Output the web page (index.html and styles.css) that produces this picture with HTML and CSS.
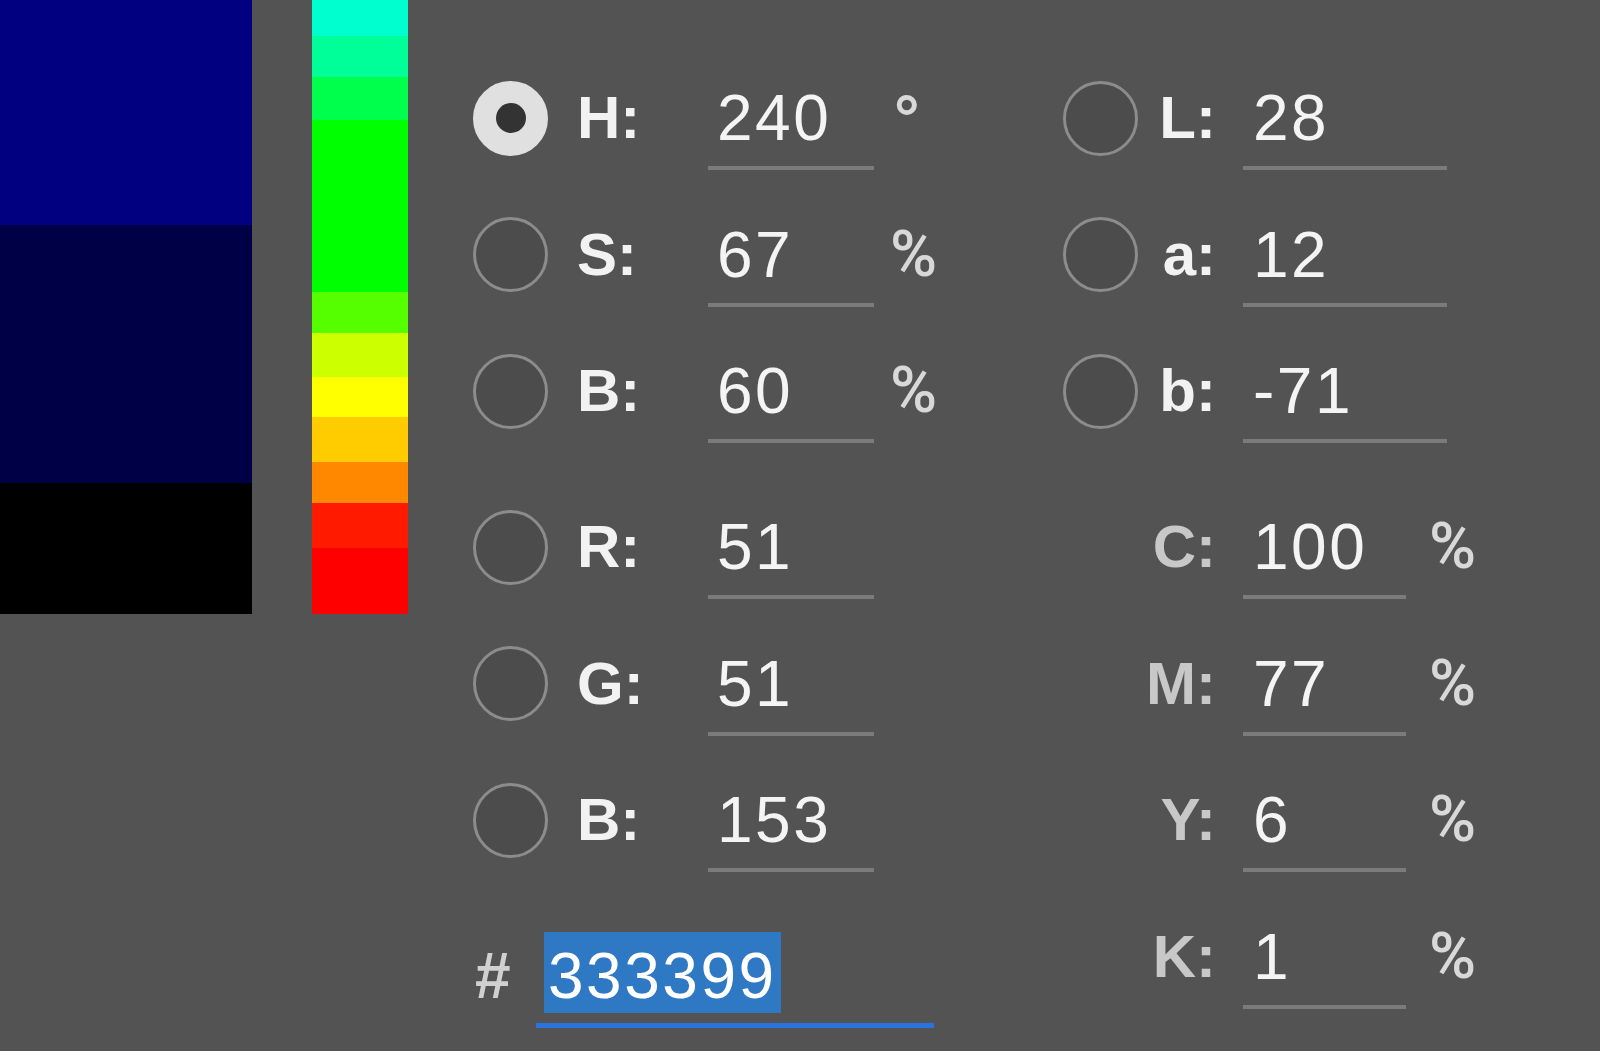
FILE: index.html
```html
<!DOCTYPE html>
<html lang="en">
<head>
<meta charset="utf-8">
<title>Color Picker</title>
<link rel="stylesheet" href="styles.css">
</head>
<body>
<div class="screen">
  <div class="swatch">
    <div class="sw sw-new"></div>
    <div class="sw sw-old"></div>
    <div class="sw sw-black"></div>
  </div>
  <div class="spectrum">
    <div class="band b1"></div>
    <div class="band b2"></div>
    <div class="band b3"></div>
    <div class="band b4"></div>
    <div class="band b5"></div>
    <div class="band b6"></div>
    <div class="band b7"></div>
    <div class="band b8"></div>
    <div class="band b9"></div>
    <div class="band b10"></div>
    <div class="band b11"></div>
  </div>
  <div class="panel">
    <div class="col col-left">
      <div class="group">
        <div class="row"><span class="radio on"><span class="dot"></span></span><span class="label">H:</span><span class="field">240</span><span class="unit deg">°</span></div>
        <div class="row"><span class="radio"></span><span class="label">S:</span><span class="field">67</span><span class="unit pct">%</span></div>
        <div class="row"><span class="radio"></span><span class="label">B:</span><span class="field">60</span><span class="unit pct">%</span></div>
      </div>
      <div class="group">
        <div class="row"><span class="radio"></span><span class="label">R:</span><span class="field">51</span></div>
        <div class="row"><span class="radio"></span><span class="label">G:</span><span class="field">51</span></div>
        <div class="row"><span class="radio"></span><span class="label">B:</span><span class="field">153</span></div>
      </div>
      <div class="hex-row">
        <span class="hash">#</span>
        <span class="hex-field"><span class="sel">333399</span></span>
      </div>
    </div>
    <div class="col col-right">
      <div class="group">
        <div class="row"><span class="radio"></span><span class="label">L:</span><span class="field wide">28</span></div>
        <div class="row"><span class="radio"></span><span class="label">a:</span><span class="field wide">12</span></div>
        <div class="row"><span class="radio"></span><span class="label">b:</span><span class="field wide">-71</span></div>
      </div>
      <div class="group">
        <div class="row"><span class="spacer"></span><span class="label dim">C:</span><span class="field">100</span><span class="unit pct">%</span></div>
        <div class="row"><span class="spacer"></span><span class="label dim">M:</span><span class="field">77</span><span class="unit pct">%</span></div>
        <div class="row"><span class="spacer"></span><span class="label dim">Y:</span><span class="field">6</span><span class="unit pct">%</span></div>
        <div class="row"><span class="spacer"></span><span class="label dim">K:</span><span class="field">1</span><span class="unit pct">%</span></div>
      </div>
    </div>
  </div>
</div>
</body>
</html>
```

FILE: styles.css
```css
* {
  box-sizing: border-box;
  margin: 0;
  padding: 0;
}

html, body {
  width: 1600px;
  height: 1051px;
  overflow: hidden;
  background: #535353;
}

body {
  font-family: "Liberation Sans", Arial, sans-serif;
}

.screen {
  display: flex;
  align-items: flex-start;
  height: 1051px;
}

/* current / previous colour swatch */
.swatch {
  width: 252px;
  flex: none;
  display: flex;
  flex-direction: column;
}
.sw-new { height: 225px; background: #000080; }
.sw-old { height: 258px; background: #000046; }
.sw-black { height: 131px; background: #000000; }

/* hue spectrum strip */
.spectrum {
  width: 96px;
  flex: none;
  margin-left: 60px;
  display: flex;
  flex-direction: column;
}
.b1 { height: 36px; background: #00ffcf; }
.b2 { height: 41px; background: #00ff99; }
.b3 { height: 43px; background: #00ff4d; }
.b4 { height: 172px; background: #00ff00; }
.b5 { height: 41px; background: #55ff00; }
.b6 { height: 44px; background: #ccff00; }
.b7 { height: 40px; background: #ffff00; }
.b8 { height: 45px; background: #ffcc00; }
.b9 { height: 41px; background: #ff8800; }
.b10 { height: 45px; background: #ff1a00; }
.b11 { height: 66px; background: #ff0000; }

/* value panel */
.panel {
  margin-left: 65px;
  padding-top: 86px;
  display: flex;
  align-items: flex-start;
}

.col-left {
  width: 590px;
  flex: none;
}

.group + .group {
  margin-top: 19.5px;
}

.row {
  display: flex;
  align-items: flex-start;
  height: 136.5px;
}

.radio {
  width: 75px;
  height: 75px;
  flex: none;
  margin-top: -5.5px;
  border-radius: 50%;
  border: 3px solid #8c8c8c;
  background: #4c4c4c;
  display: flex;
  align-items: center;
  justify-content: center;
}
.radio.on {
  background: #e0e0e0;
  border-color: #e0e0e0;
}
.radio .dot {
  width: 30px;
  height: 30px;
  border-radius: 50%;
  background: #333333;
}

.spacer {
  width: 75px;
  flex: none;
}

.label {
  font-weight: bold;
  font-size: 60px;
  line-height: 64px;
  color: #f2f2f2;
  flex: none;
}
.label.dim {
  color: #c8c8c8;
}
.col-left .label {
  margin-left: 29px;
  width: 131px;
}
.col-right .label {
  width: 78px;
  text-align: right;
}

.field {
  flex: none;
  width: 166px;
  font-size: 64px;
  line-height: 64px;
  letter-spacing: 2.5px;
  color: #f4f4f4;
  padding: 0 0 16px 9px;
  border-bottom: 4px solid #7b7b7b;
}
.col-right .field {
  width: 163px;
  margin-left: 27px;
  padding-left: 10px;
}
.col-right .field.wide {
  width: 204px;
}

.unit {
  flex: none;
  margin-left: 20px;
  font-size: 64px;
  line-height: 64px;
  color: #d8d8d8;
}
.unit.deg {
  font-weight: bold;
}
.unit.pct {
  font-family: Roboto, "Liberation Sans", sans-serif;
  font-size: 64px;
  font-weight: 500;
  margin-left: 16px;
}
.col-right .unit.pct {
  margin-left: 23px;
}

/* hex input */
.hex-row {
  display: flex;
  align-items: flex-start;
  margin-top: 7.5px;
}
.hash {
  flex: none;
  width: 61px;
  margin-left: 2px;
  padding-top: 8px;
  font-weight: bold;
  font-size: 64px;
  line-height: 73px;
  color: #d0d0d0;
}
.hex-field {
  display: flex;
  width: 398px;
  padding: 0 0 10px 8px;
  border-bottom: 5px solid #2a72dc;
}
.sel {
  background: #2f78c4;
  color: #ffffff;
  font-size: 64px;
  line-height: 73px;
  letter-spacing: 2.5px;
  padding: 8px 4px 0 4px;
}
```
